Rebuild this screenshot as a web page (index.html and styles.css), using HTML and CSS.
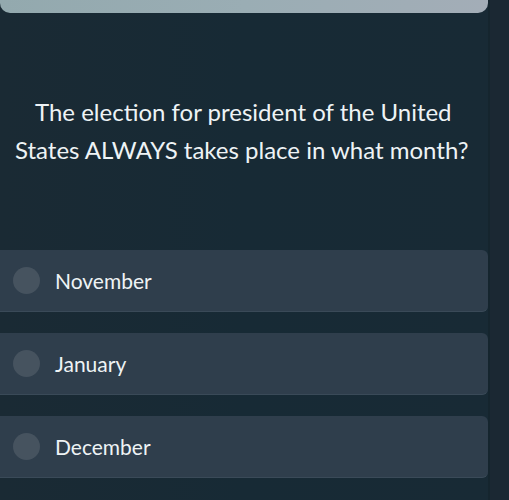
FILE: index.html
```html
<!DOCTYPE html>
<html lang="en">
<head>
<meta charset="utf-8">
<title>Question</title>
<link rel="stylesheet" href="styles.css">
</head>
<body>
  <div class="page">
    <main class="quiz">
      <div class="banner"></div>
      <p class="question">The election for president of the United States ALWAYS takes place in what month?</p>
      <ul class="choices">
        <li class="choice"><span class="radio"></span><span class="label">November</span></li>
        <li class="choice"><span class="radio"></span><span class="label">January</span></li>
        <li class="choice"><span class="radio"></span><span class="label">December</span></li>
      </ul>
    </main>
    <aside class="gutter"></aside>
  </div>
</body>
</html>
```
FILE: styles.css
```css
html, body {
  margin: 0;
  padding: 0;
  height: 100%;
}

body {
  background: #182a35;
  font-family: Lato, "Noto Sans", sans-serif;
  color: #eef3f5;
}

.page {
  display: flex;
  min-height: 100%;
}

.quiz {
  width: 488px;
  flex: none;
  background: linear-gradient(90deg, #1a2a34 0%, #172a35 50%, #182a35 100%);
}

.gutter {
  flex: 1;
  background: #1b2833;
  border-left: 2px solid #15252e;
}

.banner {
  height: 13px;
  border-radius: 0 0 10px 10px;
  background: linear-gradient(90deg, #93a9ae 0%, #9aadb4 50%, #a3adb7 100%);
}

.question {
  margin: 80px 0 0;
  padding: 0 12px 0 15px;
  text-indent: 20px;
  font-size: 24px;
  line-height: 38px;
  font-weight: 400;
  letter-spacing: 0;
}

.choices {
  list-style: none;
  margin: 81px 0 0;
  padding: 0;
  display: flex;
  flex-direction: column;
  gap: 21px;
}

.choice {
  height: 62px;
  box-sizing: border-box;
  display: flex;
  align-items: center;
  gap: 15px;
  padding-left: 13px;
  background: #2f3e4c;
  border-radius: 0 6px 6px 0;
  border-bottom: 1px solid #3a4a58;
}

.radio {
  width: 27px;
  height: 27px;
  border-radius: 50%;
  background: #46535f;
  flex: none;
  filter: blur(0.6px);
}

.label {
  font-size: 21px;
  line-height: 1;
  color: #eef3f5;
}
```
